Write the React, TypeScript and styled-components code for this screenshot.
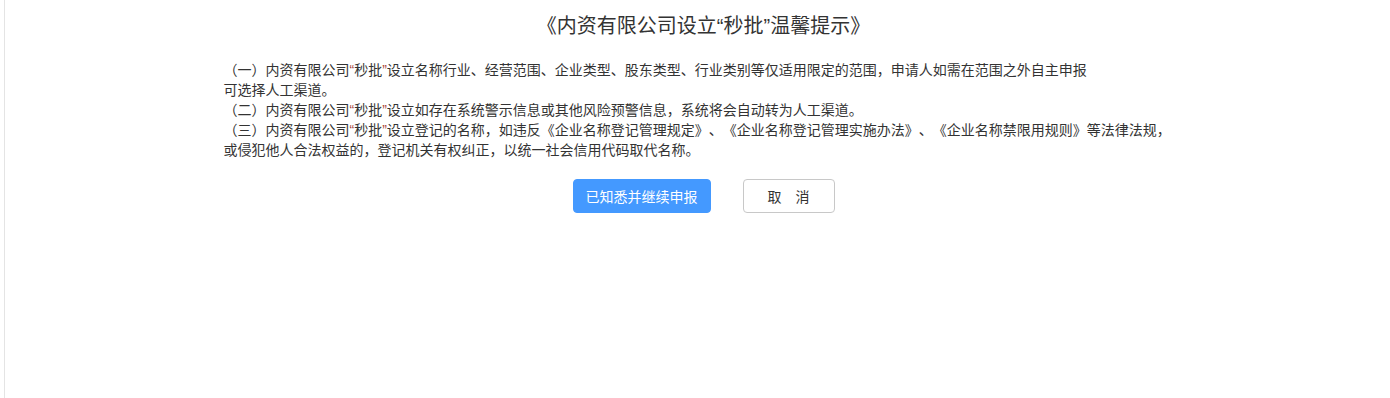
import React from "react";
import styled, { createGlobalStyle } from "styled-components";

const Global = createGlobalStyle`
  html, body { margin: 0; padding: 0; background: #fff; }
  body {
    font-family: "Noto Sans CJK SC", "Noto Sans", sans-serif;
    color: #333;
    text-spacing-trim: space-all;
  }
`;

const Page = styled.div`
  margin-left: 4px;
  border-left: 1px solid #e4e4e4;
  min-height: 398px;
  box-sizing: border-box;
  padding-left: 12px;
`;

const Content = styled.div`
  width: 960px;
  margin: 0 auto;
  padding-top: 10px;
`;

const Title = styled.h1`
  margin: 0;
  text-align: center;
  font-size: 20px;
  font-weight: 400;
  line-height: 30px;
  color: #333;
`;

const Notice = styled.div`
  margin-top: 19px;
  font-size: 14px;
  line-height: 20px;
  color: #333;
`;

const Line = styled.p`
  margin: 0;
  height: 20px;
  white-space: nowrap;
`;

const Q = styled.span<{ $accent?: boolean }>`
  font-family: "Liberation Sans", Arial, sans-serif;
  line-height: 1;
  color: ${(p) => (p.$accent ? "#a9443a" : "inherit")};
`;

const Actions = styled.div`
  display: flex;
  justify-content: center;
  gap: 32px;
  margin-top: 20px;
`;

const Button = styled.button<{ $primary?: boolean }>`
  height: 34px;
  box-sizing: border-box;
  border-radius: 4px;
  font-family: inherit;
  font-size: 14px;
  cursor: pointer;
  padding: 0;
  width: ${(p) => (p.$primary ? "138px" : "92px")};
  background: ${(p) => (p.$primary ? "#4499ff" : "#fff")};
  color: ${(p) => (p.$primary ? "#fff" : "#333")};
  border: 1px solid ${(p) => (p.$primary ? "#4499ff" : "#c8c8c8")};
`;

const Quoted = ({ children, accent }: { children: React.ReactNode; accent?: boolean }) => (
  <>
    <Q $accent={accent}>“</Q>
    {children}
    <Q $accent={accent}>”</Q>
  </>
);

export default function App() {
  return (
    <>
      <Global />
      <Page>
        <Content>
          <Title>
            《内资有限公司设立<Quoted>秒批</Quoted>温馨提示》
          </Title>
          <Notice>
            <Line>
              （一）内资有限公司<Quoted accent>秒批</Quoted>设立名称行业、经营范围、企业类型、股东类型、行业类别等仅适用限定的范围，申请人如需在范围之外自主申报
            </Line>
            <Line>可选择人工渠道。</Line>
            <Line>
              （二）内资有限公司<Quoted accent>秒批</Quoted>设立如存在系统警示信息或其他风险预警信息，系统将会自动转为人工渠道。
            </Line>
            <Line>
              （三）内资有限公司<Quoted accent>秒批</Quoted>设立登记的名称，如违反《企业名称登记管理规定》、《企业名称登记管理实施办法》、《企业名称禁限用规则》等法律法规，
            </Line>
            <Line>或侵犯他人合法权益的，登记机关有权纠正，以统一社会信用代码取代名称。</Line>
          </Notice>
          <Actions>
            <Button $primary>已知悉并继续申报</Button>
            <Button>取&emsp;消</Button>
          </Actions>
        </Content>
      </Page>
    </>
  );
}
